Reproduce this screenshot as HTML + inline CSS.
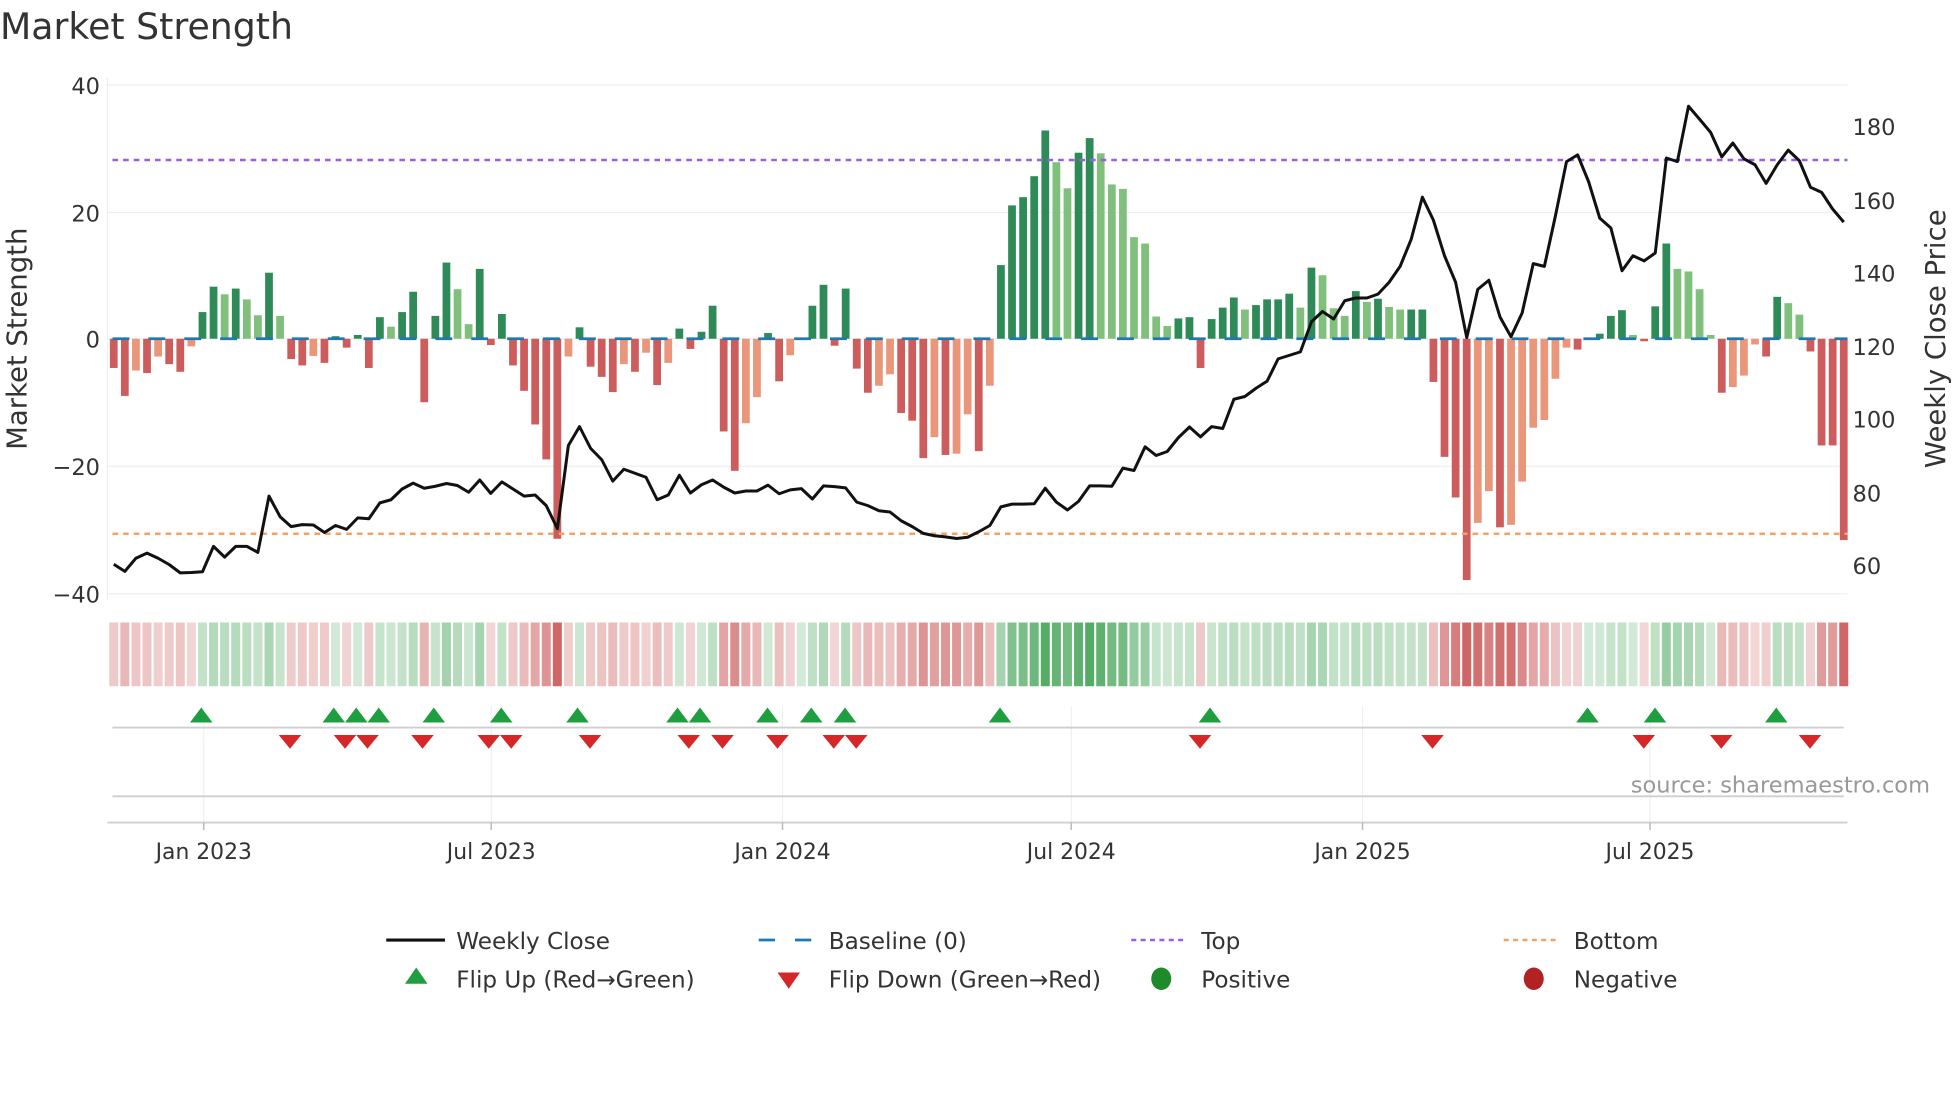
<!DOCTYPE html>
<html><head><meta charset="utf-8"><style>
html,body{margin:0;padding:0;background:#fff;width:1960px;height:1102px;overflow:hidden}
svg{display:block;font-family:"DejaVu Sans","Liberation Sans",sans-serif}
</style></head><body>
<svg id="s" width="1960" height="1102" viewBox="0 0 1568 881.6" xmlns="http://www.w3.org/2000/svg">
<text x="0" y="31" font-size="29" fill="#333">Market Strength</text>
<g stroke="#edeff5" stroke-width="1">
<line x1="86" y1="68" x2="1478" y2="68"/><line x1="86" y1="170" x2="1478" y2="170"/>
<line x1="86" y1="271" x2="1478" y2="271"/><line x1="86" y1="373" x2="1478" y2="373"/>
<line x1="86" y1="475" x2="1478" y2="475"/><line x1="86" y1="62" x2="86" y2="480"/>
</g>
<g font-size="18" fill="#333" text-anchor="end">
<text x="80" y="75">40</text><text x="80" y="177">20</text><text x="80" y="278">0</text>
<text x="80" y="380">−20</text><text x="80" y="482">−40</text></g>
<g font-size="18" fill="#333">
<text x="1482" y="108">180</text><text x="1482" y="167">160</text><text x="1482" y="225">140</text>
<text x="1482" y="284">120</text><text x="1482" y="342">100</text><text x="1482" y="401">80</text><text x="1482" y="459">60</text></g>
<text transform="translate(21,271) rotate(-90)" font-size="22" fill="#333" text-anchor="middle">Market Strength</text>
<text transform="translate(1556,271) rotate(-90)" font-size="22" fill="#333" text-anchor="middle">Weekly Close Price</text>
<g id="bars"></g>
<line x1="90" y1="271" x2="1478" y2="271" stroke="#1f77b4" stroke-width="2.2" stroke-dasharray="13.5,15.2"/>
<line x1="90" y1="128" x2="1478" y2="128" stroke="#9b5de5" stroke-width="2" stroke-dasharray="4.5,4"/>
<line x1="90" y1="427" x2="1478" y2="427" stroke="#f4a261" stroke-width="2" stroke-dasharray="4.5,4"/>
<polyline id="price" fill="none" stroke="#111" stroke-width="2.4" stroke-linejoin="round"/>
<g id="heat"></g>
<g stroke="#eef0f4" stroke-width="1">
<line x1="163" y1="565" x2="163" y2="658"/><line x1="393" y1="565" x2="393" y2="658"/>
<line x1="626" y1="565" x2="626" y2="658"/><line x1="857" y1="565" x2="857" y2="658"/>
<line x1="1090" y1="565" x2="1090" y2="658"/><line x1="1320" y1="565" x2="1320" y2="658"/></g>
<line x1="90" y1="582" x2="1475" y2="582" stroke="#cfcfcf" stroke-width="1.5"/>
<line x1="90" y1="637" x2="1475" y2="637" stroke="#cfcfcf" stroke-width="1.5"/>
<line x1="86" y1="658" x2="1478" y2="658" stroke="#cfcfcf" stroke-width="1.5"/>
<g stroke="#bbb" stroke-width="1.2">
<line x1="163" y1="658" x2="163" y2="664"/><line x1="393" y1="658" x2="393" y2="664"/>
<line x1="626" y1="658" x2="626" y2="664"/><line x1="857" y1="658" x2="857" y2="664"/>
<line x1="1090" y1="658" x2="1090" y2="664"/><line x1="1320" y1="658" x2="1320" y2="664"/></g>
<g font-size="17.5" fill="#333" text-anchor="middle">
<text x="163" y="687">Jan 2023</text><text x="393" y="687">Jul 2023</text><text x="626" y="687">Jan 2024</text>
<text x="857" y="687">Jul 2024</text><text x="1090" y="687">Jan 2025</text><text x="1320" y="687">Jul 2025</text></g>
<g id="tri"></g>
<text x="1544" y="634" font-size="18" fill="#999" text-anchor="end">source: sharemaestro.com</text>
<g font-size="18.5" fill="#333">
<line x1="309" y1="752" x2="356" y2="752" stroke="#111" stroke-width="2.5"/>
<text x="365" y="759">Weekly Close</text>
<line x1="607" y1="752" x2="651" y2="752" stroke="#1f77b4" stroke-width="2.2" stroke-dasharray="13,16"/>
<text x="663" y="759">Baseline (0)</text>
<line x1="905" y1="752" x2="948" y2="752" stroke="#9b5de5" stroke-width="2" stroke-dasharray="4,3.5"/>
<text x="961" y="759">Top</text>
<line x1="1203" y1="752" x2="1247" y2="752" stroke="#f4a261" stroke-width="2" stroke-dasharray="4,3.5"/>
<text x="1259" y="759">Bottom</text>
<polygon points="324,787 342,787 333,774" fill="#1f9e3f"/>
<text x="365" y="790">Flip Up (Red→Green)</text>
<polygon points="622,778 640,778 631,791" fill="#d62728"/>
<text x="663" y="790">Flip Down (Green→Red)</text>
<ellipse cx="929" cy="783" rx="8" ry="9" fill="#1f8a2a"/>
<text x="961" y="790">Positive</text>
<ellipse cx="1227" cy="783" rx="8" ry="9" fill="#b22222"/>
<text x="1259" y="790">Negative</text>
</g>
</svg>
<script>
var V=[-4.6,-9,-5,-5.4,-2.8,-4,-5.2,-1.2,4.2,8.2,7,7.9,6.2,3.7,10.4,3.6,-3.2,-4.2,-2.7,-3.8,0.4,-1.4,0.6,-4.6,3.4,1.9,4.2,7.4,-10,3.6,12,7.8,2.3,11,-1,3.9,-4.2,-8.2,-13.5,-19,-31.5,-2.8,1.8,-4.4,-6,-8.4,-4,-5.2,-2.2,-7.3,-3.8,1.6,-1.6,1.1,5.2,-14.6,-20.8,-13.3,-9.2,0.9,-6.7,-2.6,0,5.2,8.5,-1.1,7.9,-4.7,-8.5,-7.4,-5.6,-11.7,-12.9,-18.8,-15.5,-18.3,-18.1,-11.9,-17.7,-7.4,11.6,21,22.3,25.6,32.8,27.8,23.7,29.3,31.6,29.2,24.3,23.6,16,15,3.5,2,3.2,3.4,-4.6,3.1,4.9,6.5,4.6,5.3,6.2,6.2,7.1,4.9,11.2,10,4.8,3.6,7.5,5.8,6.3,5,4.6,4.6,4.6,-6.8,-18.6,-25,-38,-29,-24,-29.7,-29.3,-22.5,-14,-12.8,-6.3,-1.4,-1.7,0,0.8,3.6,4.5,0.6,-0.4,5.1,15,11,10.6,7.8,0.6,-8.5,-7.6,-5.8,-0.9,-2.8,6.6,5.6,3.8,-2,-16.8,-16.8,-31.7];
function typ(i){var v=V[i],p=i>0?V[i-1]:0;if(v>=0){return (v>=p||p<0)?'D':'L';}return (v<=p)?'R':'O';}
var P=[1225,1243,1210,1197,1210,1226,1247,1246,1244,1180,1207,1180,1180,1195,1053,1105,1130,1125,1126,1145,1127,1137,1108,1110,1070,1062,1035,1020,1033,1028,1021,1026,1043,1012,1046,1017,1035,1053,1050,1077,1135,925,877,932,961,1015,985,995,1005,1062,1050,1000,1045,1024,1012,1030,1045,1040,1040,1025,1047,1037,1034,1060,1027,1029,1032,1068,1077,1090,1093,1115,1130,1147,1153,1156,1160,1157,1143,1127,1080,1073,1073,1072,1033,1068,1088,1066,1027,1027,1028,982,988,928,950,940,905,878,903,877,882,808,801,780,762,706,697,688,612,586,605,559,552,552,542,512,472,403,297,355,445,512,652,530,507,600,650,590,465,472,345,207,190,258,350,375,483,445,458,438,198,207,67,100,133,195,160,200,215,262,215,178,205,272,285,327,360];
var ns="http://www.w3.org/2000/svg",bars=document.getElementById('bars'),heat=document.getElementById('heat');
var n=V.length,pitch=(1475-91)/(n-1),pts=[];
var col={D:'#2e8b57',L:'#80c07c',R:'#cd5c5c',O:'#e9967a'};
for(var i=0;i<n;i++){
 var x=91+i*pitch,v=V[i],t=typ(i),h=Math.abs(v)*5.08;
 var r=document.createElementNS(ns,'rect');
 r.setAttribute('x',x-3.1);r.setAttribute('width',6.2);
 r.setAttribute('y',v>=0?271-h:271);r.setAttribute('height',Math.max(h,0.8));
 r.setAttribute('fill',col[t]);bars.appendChild(r);
 var c=document.createElementNS(ns,'rect');
 c.setAttribute('x',x-3.6);c.setAttribute('width',7.2);c.setAttribute('y',498);c.setAttribute('height',51);
 var a=0.22+0.66*Math.min(Math.abs(v)/32,1);
 c.setAttribute('fill',v>=0?'rgba(60,160,80,'+a.toFixed(2)+')':'rgba(200,80,80,'+a.toFixed(2)+')');
 heat.appendChild(c);
 pts.push(x.toFixed(1)+','+(128+(P[i]-203)*0.3164).toFixed(1));
}
document.getElementById('price').setAttribute('points',pts.join(' '));
var up=[161,267,285,303,347,401,462,542,560,614,649,676,800,968,1270,1324,1421];
var dn=[232,276,294,338,391,409,472,551,578,622,667,685,960,1146,1315,1377,1448];
var tri=document.getElementById('tri'),s='';
up.forEach(function(x){s+='<polygon points="'+(x-9)+',578 '+(x+9)+',578 '+x+',566" fill="#1f9e3f"/>';});
dn.forEach(function(x){s+='<polygon points="'+(x-9)+',588 '+(x+9)+',588 '+x+',599" fill="#d62728"/>';});
tri.innerHTML=s;
</script>
</body></html>
